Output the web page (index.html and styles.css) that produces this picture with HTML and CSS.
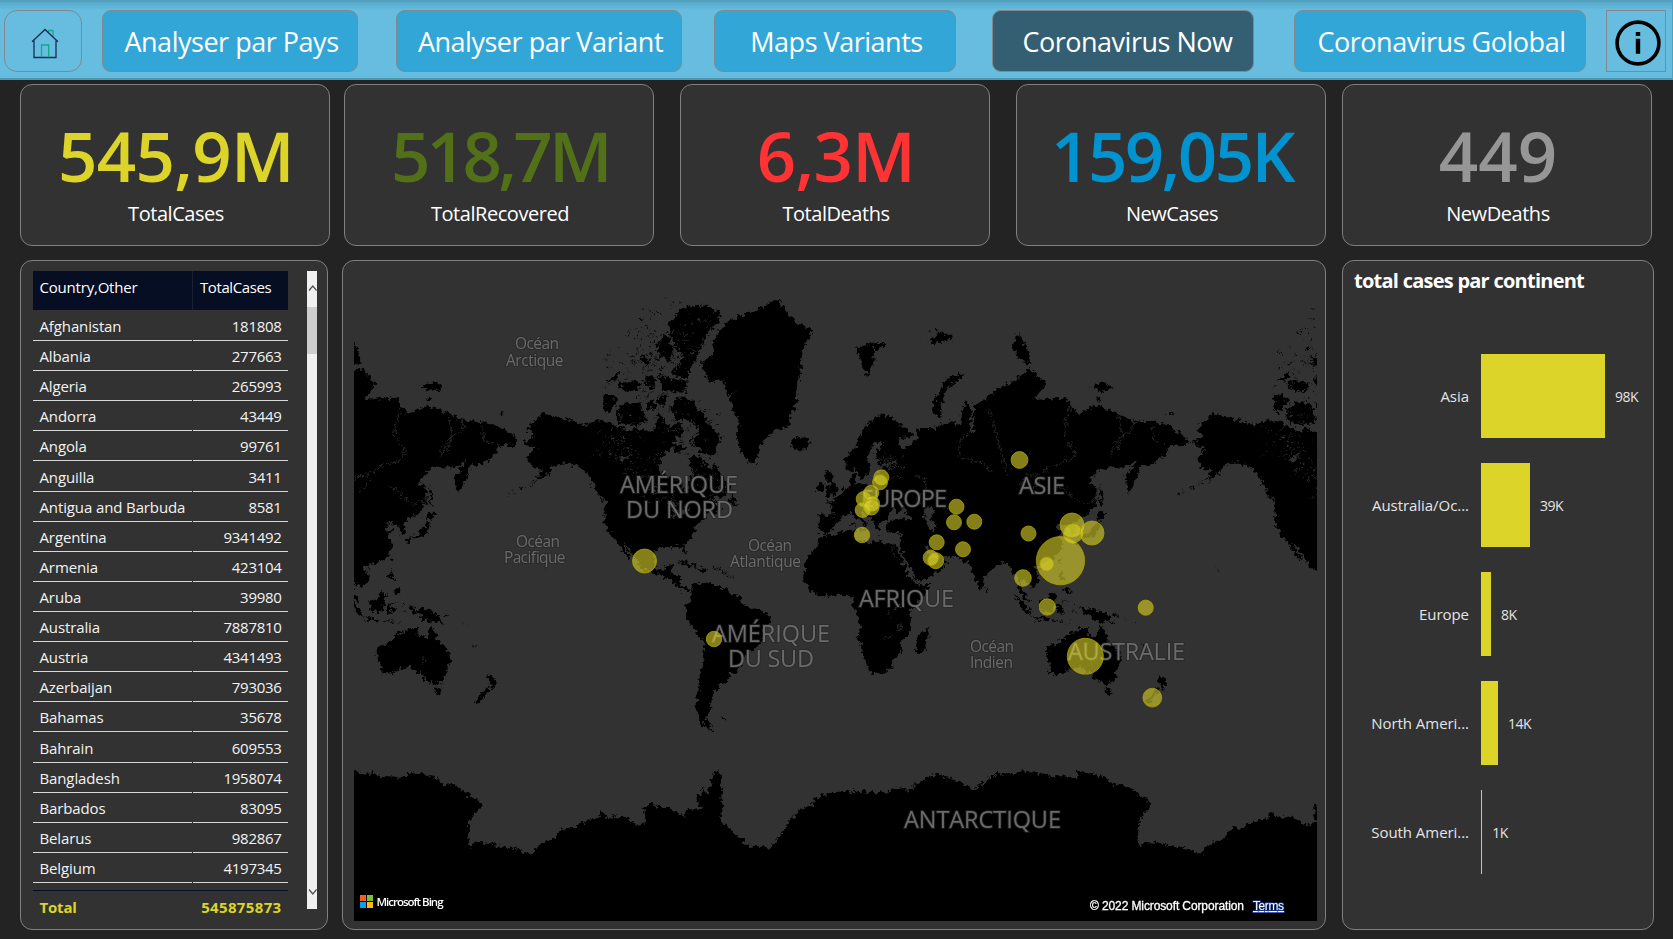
FILE: index.html
```html
<!DOCTYPE html>
<html lang="fr">
<head>
<meta charset="utf-8">
<title>Coronavirus Now</title>
<link rel="stylesheet" href="styles.css">
</head>
<body>
<header class="topbar">
  <a class="home"><svg viewBox="0 0 28 32" width="28" height="32" fill="none" stroke="#1c2a52" stroke-width="1.3"><path d="M17.5 4.500V2.500H22V9" stroke="#12a88e"/><path d="M1 13.700 14 1.500 27 13.700M3 12.500V29.500H25V12.500"/><path d="M10.500 29V17H17.700V29" stroke="#12a88e"/></svg></a>
  <a class="tab t1">Analyser par Pays</a>
  <a class="tab t2">Analyser par Variant</a>
  <a class="tab t3">Maps Variants</a>
  <a class="tab t4 active">Coronavirus Now</a>
  <a class="tab t5">Coronavirus Golobal</a>
  <a class="info"><svg viewBox="0 0 46 46" width="46" height="46"><circle cx="23" cy="23" r="20.900" fill="none" stroke="#000" stroke-width="3.600"/><path d="M20.800 12h4.400v4h-4.400zM20.800 18.800h4.400v15h-4.400z"/></svg></a>
</header>

<section class="cards">
  <div class="card"><div class="num yellow">545,9M</div><div class="cap">TotalCases</div></div>
  <div class="card"><div class="num green">518,7M</div><div class="cap">TotalRecovered</div></div>
  <div class="card"><div class="num red">6,3M</div><div class="cap">TotalDeaths</div></div>
  <div class="card"><div class="num blue">159,05K</div><div class="cap">NewCases</div></div>
  <div class="card"><div class="num grey">449</div><div class="cap">NewDeaths</div></div>
</section>

<main class="panels">
  <section class="panel list">
    <div class="grid">
      <div class="row head"><span>Country,Other</span><span>TotalCases</span></div>
      <div class="body">
        <div class="row"><span>Afghanistan</span><span>181808</span></div>
        <div class="row"><span>Albania</span><span>277663</span></div>
        <div class="row"><span>Algeria</span><span>265993</span></div>
        <div class="row"><span>Andorra</span><span>43449</span></div>
        <div class="row"><span>Angola</span><span>99761</span></div>
        <div class="row"><span>Anguilla</span><span>3411</span></div>
        <div class="row"><span>Antigua and Barbuda</span><span>8581</span></div>
        <div class="row"><span>Argentina</span><span>9341492</span></div>
        <div class="row"><span>Armenia</span><span>423104</span></div>
        <div class="row"><span>Aruba</span><span>39980</span></div>
        <div class="row"><span>Australia</span><span>7887810</span></div>
        <div class="row"><span>Austria</span><span>4341493</span></div>
        <div class="row"><span>Azerbaijan</span><span>793036</span></div>
        <div class="row"><span>Bahamas</span><span>35678</span></div>
        <div class="row"><span>Bahrain</span><span>609553</span></div>
        <div class="row"><span>Bangladesh</span><span>1958074</span></div>
        <div class="row"><span>Barbados</span><span>83095</span></div>
        <div class="row"><span>Belarus</span><span>982867</span></div>
        <div class="row"><span>Belgium</span><span>4197345</span></div>
      </div>
      <div class="row total"><span>Total</span><span>545875873</span></div>
    </div>
    <div class="scroll">
      <svg viewBox="0 0 10 8" width="10" height="8"><path d="M2 6.500 5.800 2 9.600 6.500"/></svg>
      <div class="thumb"></div>
      <svg class="down" viewBox="0 0 10 8" width="10" height="8"><path d="M2 1.500 5.800 6 9.600 1.500"/></svg>
    </div>
  </section>

  <section class="panel map">
    <svg class="world" viewBox="354 271 963 650" width="963" height="650">
      <defs>
        <filter id="coast" filterUnits="userSpaceOnUse" x="340" y="260" width="990" height="670">
          <feTurbulence type="fractalNoise" baseFrequency="0.24" numOctaves="3" seed="4" result="n"/>
          <feDisplacementMap in="SourceGraphic" in2="n" scale="9" xChannelSelector="R" yChannelSelector="G"/>
        </filter>
      </defs>
      <g filter="url(#coast)">
        <g id="land"></g>
        <path id="ant" d="M354 771 370 775 375 772 380 776 407 777 408 772 420 773 433 777 443 784 453 785 465 792 470 796 483 802 478 810 473 814 469 825 468 835 469 847 477 842 490 843 503 847 520 850 532 854 540 843 555 838 560 829 573 827 587 820 598 818 601 812 607 817 627 818 635 825 647 823 643 808 650 802 657 807 668 807 683 816 688 809 702 810 697 800 703 787 706 794 711 788 713 775 718 770 722 777 721 790 722 807 721 822 730 829 742 840 752 848 758 846 770 848 777 840 787 828 789 817 795 818 800 810 812 805 815 798 835 792 862 791 887 793 897 787 908 792 917 783 930 777 936 772 945 778 963 782 973 790 987 780 997 774 1013 773 1024 771 1024 940 354 940Z"/>
        <use href="#ant" x="670"/><use href="#ant" x="-670"/>
      </g>
      <g class="big">
        <text x="620" y="492.500" textLength="118">AMÉRIQUE</text><text x="626" y="517.500" textLength="107">DU NORD</text>
        <text x="861" y="506.500" textLength="86">EUROPE</text><text x="1019" y="494" textLength="46">ASIE</text>
        <text x="859" y="606.500" textLength="95">AFRIQUE</text><text x="712" y="642" textLength="118">AMÉRIQUE</text>
        <text x="728" y="667" textLength="86">DU SUD</text><text x="1068" y="660" textLength="117">AUSTRALIE</text>
        <text x="904" y="828" textLength="157">ANTARCTIQUE</text>
      </g>
      <g class="small">
        <text><tspan x="515" y="349" textLength="44">Océan</tspan><tspan x="506" y="365.500" textLength="57.500">Arctique</tspan></text>
        <text><tspan x="516" y="546.500" textLength="44">Océan</tspan><tspan x="504" y="563" textLength="61.500">Pacifique</tspan></text>
        <text><tspan x="748" y="550.500" textLength="44">Océan</tspan><tspan x="730" y="567" textLength="71">Atlantique</tspan></text>
        <text><tspan x="970" y="651.500" textLength="44">Océan</tspan><tspan x="970" y="668" textLength="43">Indien</tspan></text>
      </g>
      <g id="dots" class="dots"></g>
      <g><path fill="#f25f22" d="M360 895h6v6h-6z"/><path fill="#80bb3c" d="M367 895h6v6h-6z"/><path fill="#00a3ee" d="M360 902h6v6h-6z"/><path fill="#fdb813" d="M367 902h6v6h-6z"/></g>
      <text class="bing" x="376.500" y="905.500" textLength="67">Microsoft Bing</text>
      <text class="copy" x="1090" y="910" textLength="154">© 2022 Microsoft Corporation</text>
      <text class="copy terms" x="1253" y="910" textLength="31">Terms</text>
    </svg>
  </section>

  <section class="panel chart">
    <h2>total cases par continent</h2>
    <div class="bars">
      <div class="bar"><span>Asia</span><i style="width:124px"></i><b>98K</b></div>
      <div class="bar"><span>Australia/Oc...</span><i style="width:49px"></i><b>39K</b></div>
      <div class="bar"><span>Europe</span><i style="width:10px"></i><b>8K</b></div>
      <div class="bar"><span>North Ameri...</span><i style="width:17px"></i><b>14K</b></div>
      <div class="bar"><span>South Ameri...</span><i style="width:1.200px"></i><b>1K</b></div>
    </div>
  </section>
</main>
<script src="map.js"></script>
</body>
</html>
```

FILE: styles.css
```css
* { box-sizing: border-box; }
body {
  margin: 0;
  width: 1673px;
  height: 939px;
  overflow: hidden;
  background: #232323;
  color: #fff;
  font-family: "Open Sans", "Noto Sans", sans-serif;
}
.topbar {
  display: flex;
  height: 80px;
  padding: 9px 0 0 3px;
  background: linear-gradient(#58a9c9, #66bde0 8px);
  border: 1px solid #4f9fbd;
  border-top: 2px solid #529fbe;
  border-bottom: 2px solid #4b97b3;
  border-left: 0;
}
.home, .tab, .info {
  display: flex;
  align-items: center;
  justify-content: center;
  height: 62px;
  margin-top: -1px;
  border: 1px solid #82888b;
}
.home { width: 78px; border-radius: 13px; margin-left: 1px; padding-top: 5px; padding-left: 3px; }
.tab {
  border-radius: 9px;
  background: #33a6d8;
  font-size: 27px;
  letter-spacing: -0.48px;
  white-space: nowrap;
  padding: 1px 0 0 3px;
}
.tab.active { background: #345f72; padding-left: 9px; }
.t1 { width: 256px; margin-left: 20px; }
.t2 { width: 286px; margin-left: 38px; }
.t3 { width: 242px; margin-left: 32px; }
.t4 { width: 262px; margin-left: 36px; }
.t5 { width: 292px; margin-left: 40px; }
.info { width: 60px; margin-left: 20px; padding-top: 3px; padding-left: 3px; }

.cards {
  display: grid;
  grid-template-columns: 324px 336px 336px 326px 310px;
  padding: 4px 0 0 20px;
}
.card {
  width: 310px;
  height: 162px;
  border: 1px solid #7f7f7f;
  border-radius: 12px;
  background: #323232;
  text-align: center;
  padding: 23px 0 0 2px;
}
.num { font-size: 69px; font-weight: 600; line-height: 94px; height: 92px; letter-spacing: -0.7px; }
.cap { font-size: 20px; line-height: 28px; letter-spacing: -0.45px; }
.yellow { color: #dcd428; }
.green { color: #527018; letter-spacing: -3.7px; }
.red { color: #ff3333; }
.blue { color: #0093d0; letter-spacing: -2.6px; }
.grey { color: #969696; letter-spacing: 0; }

.panels {
  display: flex;
  padding: 14px 0 0 20px;
}
.panel {
  height: 670px;
  border: 1px solid #7f7f7f;
  border-radius: 12px;
  background: #323232;
}
.list { width: 308px; display: flex; padding: 10px 0 0 12px; }
.grid { width: 255px; font-size: 15px; letter-spacing: -0.2px; }
.row { display: grid; grid-template-columns: 159px 95px; column-gap: 1px; height: 30.12px; line-height: 29px; }
.row span { padding: 1px 6.500px 0; border-bottom: 1px solid #d8d8d8; white-space: nowrap; }
.row span:last-child { text-align: right; }
.body .row { color: #f2f2f2; font-weight: 500; }
.body .row span { padding-top: 2px; line-height: 28px; letter-spacing: -0.12px; }
.body .row span:last-child { letter-spacing: -0.3px; }
.head { height: 39px; background: #050e23; column-gap: 0; }
.head span { border: 0; line-height: 30px; }
.row.head span:last-child { text-align: left; border-left: 1px solid #1a2133; padding-left: 7px; letter-spacing: -0.4px; }
.body { height: 580px; }
.total { border-top: 1px solid #050e23; height: 34px; line-height: 31px; color: #dcd428; font-weight: 700; }
.total span { border: 0; padding-top: 1px; }
.row.total span:last-child { letter-spacing: 0.35px; }
.scroll { width: 10px; height: 638px; margin-left: 19px; background: #f0f0f0; display: flex; flex-direction: column; }
.scroll svg { margin-top: 13px; fill: none; stroke: #505050; stroke-width: 1.3; flex: none; }
.thumb { height: 47px; margin-top: 15px; background: #cdcdcd; }
.scroll .down { margin-top: auto; margin-bottom: 13px; }

.map { width: 984px; margin-left: 14px; padding: 10px 0 0 11px; }
.world { display: block; }
.world text { font-family: "Open Sans", "Noto Sans", sans-serif; }
.land { fill: #000; }
.water { fill: #323232; }
.river { fill: none; stroke: #323232; stroke-width: 0.8; }
.big text, .small text {
  fill: #6a6a6a;
  stroke: #262626;
  stroke-width: 2px;
  stroke-opacity: 0.6;
  paint-order: stroke;
}
.big text { font-size: 23.500px; }
.small text { font-size: 15.500px; }
.dots circle { fill: #dcd428; fill-opacity: 0.6; stroke: #aaa300; stroke-opacity: 0.8; }
.world .bing { font-size: 11.500px; fill: #fff; font-weight: 600; }
.world .copy { font-family: "Liberation Sans", Arial, sans-serif; font-size: 12px; fill: #fff; stroke: #fff; stroke-width: 0.3px; }
.world .terms { text-decoration: underline; stroke: #1c3a8a; stroke-width: 1.500px; paint-order: stroke; }

.chart { width: 312px; margin-left: 16px; }
.chart h2 { margin: 6px 0 0 11px; font-size: 20px; line-height: 27px; font-weight: 700; letter-spacing: -0.75px; }
.bars { display: flex; flex-direction: column; gap: 25px; padding-top: 60px; }
.bar { display: flex; align-items: center; height: 84px; color: #e4e4e4; }
.bar span { width: 126px; text-align: right; font-size: 15px; letter-spacing: -0.05px; white-space: nowrap; }
.bar i { height: 84px; margin-left: 12px; background: #dcd428; }
.bar b { margin-left: 10px; font-size: 14px; font-weight: 400; letter-spacing: -0.5px; }
```

FILE: map.js
```js
// Mercator world map: coastlines are lists of "lon,lat" pairs.
const NS = 'http://www.w3.org/2000/svg';
const px = lon => 835.5 + lon * 1.861;
const py = lat => 605 - 106.6 * Math.log(Math.tan(Math.PI / 4 + lat * Math.PI / 360));
const toPath = s => 'M' + s.trim().split(/\s+/).map(p => {
  const [a, b] = p.split(',').map(Number);
  return px(a).toFixed(1) + ' ' + py(b).toFixed(1);
}).join('L');

const land = [
  '-168,65.6 -162,66.5 -166,68.3 -163,69.5 -156.5,71.3 -150,70.5 -141,69.7 -135,69 -129,70 -125,69.8 -121,69.5 -115,68.5 -110,67.9 -108,68.5 -103,68 -97,68 -94.5,72 -92,69.5 -88,68.5 -85,69.8 -82,69 -82,67 -86,66.5 -87,64.5 -93,62.5 -94.5,59 -92.5,57 -88,56.5 -82.5,55 -82,53 -79,51.5 -79.5,54.5 -76.7,57 -78.5,60 -77.5,62.4 -73,62 -69.5,60 -67,58.5 -64.5,60.3 -61.5,57 -57,54.5 -55.7,52.5 -60,50.3 -66,50.2 -68,48.8 -64.5,49 -65,47 -61,45.5 -66,43.6 -67,44.8 -70,43.5 -70.5,41.8 -74,40.5 -76,37 -75.6,35.3 -79,33 -81.3,31 -80,27 -80.5,25.2 -82,27 -83,29.7 -86,30.3 -89.5,29.3 -94,29.5 -97.3,27.5 -97.7,22 -95.8,18.7 -92,18.6 -90.4,21 -87,21.5 -88.3,16 -83.3,15 -83.7,11 -81,9 -79.5,9.5 -77.5,8.5 -79,8 -80.3,7.4 -83,8.3 -85.7,10 -87.5,13 -92,14.5 -95,16 -99,16.7 -105,20 -105.7,22.5 -109,26 -113,31 -114.7,31.7 -111,26 -109.5,23 -112,25 -115,28 -117,32.5 -120.6,34.5 -122.5,37.5 -124.3,40.5 -124,46 -123,49 -127.5,51 -130.5,54.5 -134,58 -139,59.7 -146,60.7 -151.5,59.5 -153.5,58 -158,56.3 -164,54.7 -160,56.2 -157.5,58.7 -162,58.7 -165,60.5 -166,61.8 -161,64.4 -166,64.5',
  '-80,73.7 -76,72.8 -71,71 -67.5,69 -61.5,66.5 -65,63 -66,62 -71.5,63 -74,64.5 -78,65 -73,68 -78,70 -85,70 -89,72 -85,73.7',
  '-117,69.5 -106,69 -101.5,69.5 -105,73 -113,73 -118,71.8', '-125,72 -123,71.2 -116,73.3 -120,74.2 -124.5,74.3',
  '-61,82.5 -70,83.1 -82,83 -90,81.8 -87,80 -81,79 -88,77 -80,76.3 -78,77.5 -75,78.5 -70,80.5',
  '-96,80 -91,81.2 -87,79.5 -90,78.3 -94,79', '-96,76.7 -80,76 -80,74.6 -92,74.7', '-117,76 -106,76 -106,74.8 -113,74.6 -117,75.3',
  '-102,73 -97,73.5 -97,71.6 -101,72', '-95.5,74 -90,74 -92,72.7 -95,72.3', '-87,65.5 -81,64 -84,62.8 -87,63.5',
  '-103,76.5 -97,76.5 -97,75 -102,75.5', '-123,76 -116,77.3 -118,76', '-105,79 -99,78.5 -102,77.8', '-59,47.7 -53,46.7 -53.5,49.2 -56,51.5',
  '-85,22 -80,23.2 -74.5,20.2 -77.5,19.9', '-74.3,18.4 -73,19.9 -68.5,18.6 -71.5,17.8',
  '-73,78.2 -68,76.1 -60,76 -55,72 -51.5,69.5 -53.5,67 -51,63.5 -48,61 -43.5,60 -42,62 -39.5,65.3 -33,67.8 -24,69 -25,71 -21.5,72 -21,74.5 -19,77 -18,79.5 -12,81.3 -22,82 -31,83.5 -45,82.7 -58,82 -66,80.5 -65,79',
  '-24,65.5 -22,66.4 -16,66.5 -13.7,65 -18.5,63.4 -22.5,63.9',
  '-77.5,8.5 -75.5,10.8 -72,12 -70,11.7 -63,10.7 -60,8.5 -55,6 -51.5,4.3 -50,0.5 -44,-2.6 -40,-2.9 -35.3,-5.2 -35,-8.5 -38.8,-13 -39.3,-18 -42,-22.8 -46.5,-24.2 -48.6,-26.5 -50,-30 -53.5,-34 -57.5,-34.8 -57,-36.5 -58.5,-38.5 -62.3,-39 -63,-41.2 -65.3,-42.5 -65.5,-45 -67.5,-46 -66,-48 -69,-50.8 -68.5,-52.5 -65.5,-54.8 -68.5,-55.5 -73.5,-52.5 -75.5,-48 -73.5,-42 -73.5,-37 -71.5,-30 -70.3,-19 -76,-14 -79.5,-7.5 -81.2,-5 -80,-3 -80.7,-1 -78.8,2 -77.3,4',
  '-6,35.8 -2,35.2 3,36.8 10.8,37.2 10.3,34 15,32.3 20,31 21,32.8 25,31.7 32.3,31.2 34,27 37.3,21 39,16 43,12 44.5,10.5 51.2,11.8 48,5 42,-1.5 39.3,-5 40.6,-14.5 35,-20 35.4,-24 32.8,-26.5 30.5,-31 26.5,-33.8 20,-34.8 18.3,-33.5 15,-27 14.3,-22 11.8,-17 13.6,-12 12.3,-6 8.8,-1 9.7,3.8 6,4.4 3,6.4 -2,4.8 -7.5,4.4 -12.5,7.5 -16.7,12.5 -17.4,14.7 -16.3,19 -17,21 -13,27.7 -9.8,30 -9.5,32',
  '49.3,-12 50.3,-15.5 47,-25 44,-25 43.3,-22 44.5,-16.5',
  '-9,43.2 -1.8,43.4 -1.2,46 -4.5,48.4 -1.5,48.8 1.6,50.5 4.5,52.5 7,53.5 8.5,55 8.2,57 10.5,57.7 10.5,55 11,54 14.3,54 19,54.4 21,55.5 21.5,57.5 24.3,57.8 23.5,59.2 30,59.9 28,60.5 23,60 21.3,61.5 21.5,63 25.4,65 22,65.8 17.5,62.3 17.2,60.7 19,59.8 16.5,57 14.3,55.5 12.8,55.6 11,59 8,58.1 5.5,59 5,62 10,64 14,67.5 19,70 25.7,71 31,70.3 41,67.5 40.5,66.3 33,66.7 35,64.3 38,64 40,65 44,66.2 44,68.5 53.5,68.5 60.5,69.8 67,69 67.500,71.5 70,73.2 73,71.5 72,68 74,67.5 74.5,72.5 80.5,73.5 87,75 98,76.3 104,77.7 113,75.8 107,73.3 113.5,73.6 124,73.7 130,71 140,72.5 150,71.5 160,69.7 170,69.8 180,68.8 190,66 187,64.4 180,65 177,62.5 170,60 163.5,59.8 162,56 157,51 155.7,57 162,61 155,59.3 143,59.2 135.5,54.8 141,53 140,48 135,43.5 130.5,42.3 127.5,39.5 129.4,36 126.5,34.4 126.5,37.5 124.5,39.8 121.5,39 121.8,40.8 118,39 119,37.2 122.3,37.2 119.3,35 121.8,31.5 121.5,28.5 118,24.5 113.5,22.2 109.8,21.3 106.5,20 108.8,15.5 109,11.7 105.2,8.7 105,10.3 102.5,12 100.5,13.4 99.5,9.5 103.4,4 104,1.4 101.3,2.8 98.5,8 98.5,14 97.5,16.7 94.3,16 94.2,18.8 91.5,22.6 87,21.3 82.3,16.7 80.2,15 79.8,10.5 77.5,8.1 74.8,13 72.8,19 72.5,21.3 69,22.3 66.7,25 57.5,25.6 54,26.7 50.5,30 48,30 50,26.5 51.5,25 54.5,24.2 56.4,26 59.8,22.5 57.5,19 52,15.6 45,12.8 43,13 42.5,16.5 39,21.3 35,28 34.9,29.5 34.3,31.3 36,36.6 30.5,36.5 27.5,36.8 26.2,39.3 29,41.2 35,42 41,41.3 38,44.5 37,46.8 35,46.2 36.5,45.2 33.5,44.5 31,46.6 28.5,43.8 28,41.5 26,40.8 23.5,40.3 24,37.7 22.5,36.5 19.5,41.5 13.7,45.3 12.5,44.3 14,42.5 18.5,40.1 16.5,39.6 17,39 15.8,38 15,40 10.3,43 8.7,44.3 3.5,43.2 3,41.8 -0.3,39.3 -2,36.8 -5.5,36 -9,37',
  '-5.5,50.2 1,51 1.5,52.7 -2,56 -2,57.6 -5,58.6 -6,56.5 -3,54.5 -5,52', '-10,52 -6.3,52.2 -6,54.5 -8,55.2 -10,54',
  '51.5,71.5 57,70.5 56.5,73 62,75.6 69,76.6 67,77 59,76.2 54,73.8', '11,79.7 20,80.2 21,78.5 17,76.6', '20,80.2 27,80.2 22,79.4',
  '95,80 98,81.2 105,79 104,78 98,78.8', '50,80.3 56,81.2 62,80.7 56,80.2', '137,75.3 145,76 150,75 141,74.7', '140,73.6 143,73.5 141,73.1', '178.5,71.4 182,71.3 180,70.9',
  '142.5,54.2 143.5,50 143,46.5 142,46.5 142,51', '140,42 141.8,45.4 145.3,43.4 143,42', '131,34 136,35.8 140,40 141.5,41 142,39.5 140.8,35.6 136,33.6',
  '129.8,33.5 131.8,33 131,31.2 130.2,31.4', '120,23 121.5,25.2 121,22', '108.8,19.5 111,20 109.5,18.3',
  '120,16 121,18.5 122,18 121.5,15 124,13 120.5,14', '122,7.5 125.5,9.8 126.3,7 125,6', '109,1.5 113,3.2 117,7 119,5 117.5,1 116,-4 110.5,-3',
  '95.3,5.6 98,4 104,-2 106,-5.8 102,-4 98.5,1.5', '105.3,-6.8 110.5,-6.5 114.5,-7.8 114,-8.7 108,-7.8', '119,-5 119,0 121,1.2 125,1.5 121,0.5 121,-1 123,-1 122,-5 121,-3 120,-5',
  '117,-8.3 123,-8.3 122,-9 117,-9', '123.5,-10.3 127,-8.4 126,-9.3', '127.5,1.5 128.5,0.5 128,-0.8', '127,-3.2 130.5,-3 128,-3.6',
  '131,-0.7 134,-1 135,-3.3 138,-1.7 144,-4 147.5,-6 147.5,-8 150.5,-10.5 146,-9 143,-9 138,-8.2 137,-5 133,-4', '148.5,-5.7 152,-4.3 151,-6',
  '155,-6 157,-7.5 156,-7', '160,-9 162,-10.3 161,-10', '164,-20.2 167,-22.3 166,-22', '80,9.5 81.8,7 80.5,6',
  '142.5,-10.8 145.5,-15 146.5,-19 150,-22.5 153.2,-25 153.3,-29 151,-33.7 150,-37.3 146.5,-39 143.5,-38.7 140,-37.8 138,-35.5 137.7,-33 135.7,-34.8 131.3,-31.5 126,-32.3 123.5,-34 118,-35 115,-34.3 115.8,-32 113.3,-26 114,-22 120.5,-19.8 122.3,-17.5 126,-14.2 129,-15 131,-12.2 136.8,-12.2 135.7,-15 140,-17.6 141.5,-14',
  '144.5,-41 148.4,-41 147.5,-43.6 146,-43.5', '173,-34.5 178.5,-37.8 175.3,-41.5 174.3,-39', '172.7,-40.7 174.3,-41.7 171,-44.5 169,-46.6 166.4,-46 170,-43',
  '8.5,41 9.8,41 9.3,39 8.5,39', '12.5,38 15.5,38.2 15,36.8', '23.5,35.5 26.2,35.3 24,34.9', '32.5,35 34.3,35.5 33,34.6',
  '-155.8,20 -155,19.5 -155.6,19', '-61,-51.5 -58,-51.5 -60,-52.2', '-154.5,57.8 -152.3,57.8 -154,56.8', '-132,54 -131.5,53 -132.5,53', '-128,50.8 -124,49 -125,48.6'
];
const water = [
  '47,45 51,47 53,45 51,42 54,39.5 53.5,37 50,37.2 49,40 47.5,43', '-92,46.8 -88,48.8 -84.5,46.6 -88,47', '-87.7,42 -86.5,42 -85,45.8 -87.3,45.3',
  '-84,46 -80.5,45 -82,43.2 -83.5,44', '-83,41.6 -79,42.8 -81,42.2', '32,0.3 34,0 33,-2.5 32,-2', '59,45.5 61,46 60,44.2',
  '-120,66 -119,67 -122,66', '-117,61.5 -110,62.8 -114,61', '-98,50.5 -97,53.5 -99,53', '-111,58.8 -106,59.3 -109,59', '30,60.3 33,60.5 32,61.5', '35,61 36,62.3 35.5,62.5',
  '137,-30 138,-29 138,-31', '139,-27 140,-28 139,-29'
];
const rivers = [
  '127,73 124,70 123,67 129,63 126,61 118,60', '142,54 139,48.5 133,48 130,49 127,50 124,53 119,53', '104,52 108,54 110,56', '152,71 154,67 150,65 148,62',
  '161,69.500 158,67.500 154,67 151,63', '83,72 86,68 88,65 91,60 92,56', '73,68 67,66 66,62.500 72,61 79,60.500 84,57.500', '177,65 171,66 170,69',
  '118,60 108,57 103,57 99,54', '48,46 44,49 49,53 48,56 42,57', '29,-4 30,-8', '34,-10 35,-14', '26,-18 30,-16', '31,31 31,27 33,24'
];

const g = document.getElementById('land');
const copy = document.createElementNS(NS, 'g');
copy.id = 'continents';
const add = (cls, d) => {
  const p = document.createElementNS(NS, 'path');
  p.setAttribute('class', cls);
  p.setAttribute('d', d);
  copy.appendChild(p);
};
land.forEach(s => add('land', toPath(s) + 'Z'));
water.forEach(s => add('water', toPath(s) + 'Z'));
rivers.forEach(s => add('river', toPath(s)));

// Small lakes of the Canadian shield, Finland and islets of the Arctic archipelago.
let seed = 7;
const rnd = () => (seed = (seed * 16807) % 2147483647) / 2147483647;
const specks = (cls, n, x0, y0, x1, y1, spread) => {
  let d = '';
  for (let i = 0; i < n; i++) {
    const t = rnd();
    const x = x0 + (x1 - x0) * t + (rnd() - 0.5) * spread;
    const y = y0 + (y1 - y0) * t + (rnd() - 0.5) * spread;
    const w = 1 + rnd() * 2.4, h = 0.8 + rnd() * 1.6;
    d += `M${x.toFixed(1)} ${y.toFixed(1)}l${w.toFixed(1)} ${(-h / 2).toFixed(1)}l${(-w / 3).toFixed(1)} ${h.toFixed(1)}z`;
  }
  add(cls, d);
};
specks('water', 180, 605, 440, 675, 500, 36);
specks('water', 90, 700, 470, 735, 490, 34);
specks('water', 60, 875, 452, 895, 475, 18);
specks('water', 130, 610, 400, 710, 420, 60);
specks('water', 70, 660, 365, 705, 320, 40);
specks('land', 190, 625, 380, 680, 320, 55);
specks('land', 120, 630, 410, 700, 430, 55);
specks('land', 14, 930, 335, 955, 338, 12);
specks('land', 12, 506, 493, 545, 478, 2);
specks('land', 16, 712, 568, 735, 578, 4);
g.appendChild(copy);
[-670, 670].forEach(dx => {
  const u = document.createElementNS(NS, 'use');
  u.setAttribute('href', '#continents');
  u.setAttribute('x', dx);
  g.appendChild(u);
});

const dots = [
  [644.5, 561, 12], [714, 639, 7.7], [881.3, 477.3, 7.5], [880, 482.3, 7.500], [871.3, 492.7, 7.5], [863.7, 499, 7.5], [872, 503.500, 7.5], [862.7, 510, 7.5], [871.3, 507.3, 7.8], [862, 535, 7.7],
  [956.5, 506.7, 7.5], [954, 522.3, 7.5], [974.3, 521.7, 7.5], [936.7, 542.3, 7.5], [963, 549.3, 7.5], [930.7, 557.7, 7.5], [935.7, 560.7, 8], [1019.5, 460, 8.4], [1028.5, 533.5, 7.5],
  [1023, 578, 8.3], [1072, 525, 12], [1073, 533.5, 9.7], [1092, 533, 12], [1060.5, 560.7, 24.1], [1046.7, 564, 7], [1047.3, 607, 8.2], [1145.7, 607.7, 7.6], [1085.3, 656.3, 18], [1152.3, 697.7, 9.4]
];
const dg = document.getElementById('dots');
dots.forEach(([x, y, r]) => {
  const c = document.createElementNS(NS, 'circle');
  c.setAttribute('cx', x);
  c.setAttribute('cy', y);
  c.setAttribute('r', r);
  dg.appendChild(c);
});
```
